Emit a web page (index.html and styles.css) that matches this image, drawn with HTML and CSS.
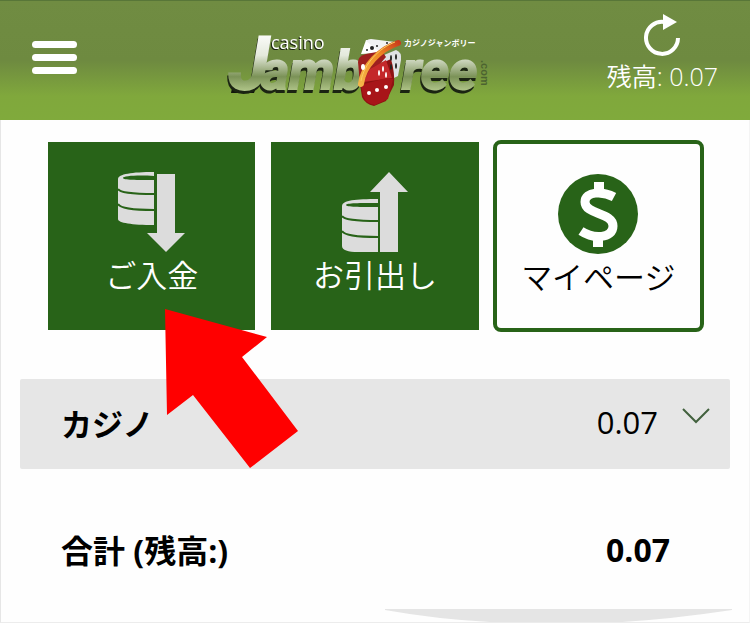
FILE: index.html
```html
<!DOCTYPE html>
<html lang="ja">
<head>
    <meta charset="UTF-8">
    <meta name="viewport" content="width=device-width, initial-scale=1.0">
    <title>カジノジャンボリー</title>
    <link rel="stylesheet" href="styles.css">
</head>
<body>
    <header class="header">
        <button class="menu" type="button" aria-label="メニュー">
            <span class="bar"></span>
            <span class="bar"></span>
            <span class="bar"></span>
        </button>
        <a class="logo" href="#" aria-label="casino Jamboree">
            <svg width="286" height="80" viewBox="232 28 286 80">
                <defs>
                    <linearGradient id="metal" gradientUnits="userSpaceOnUse" x1="0" y1="31" x2="0" y2="92">
                        <stop offset="0" stop-color="#ffffff"/>
                        <stop offset="0.4" stop-color="#e4e9dc"/>
                        <stop offset="0.6" stop-color="#a9b890"/>
                        <stop offset="0.75" stop-color="#7b9257"/>
                        <stop offset="1" stop-color="#b4c98c"/>
                    </linearGradient>
                    <linearGradient id="ring" gradientUnits="userSpaceOnUse" x1="360" y1="85" x2="400" y2="42">
                        <stop offset="0" stop-color="#f5b64a"/>
                        <stop offset="0.6" stop-color="#f08a24"/>
                        <stop offset="1" stop-color="#c8391a"/>
                    </linearGradient>
                </defs>
                <path class="logo-shadow" d="M232 88h24l-2 5h-23z"/>
                <g class="logo-name">
                    <text class="logo-big" x="229" y="89">J</text>
                    <text x="261" y="89">amb</text>
                    <text x="402" y="89">ree</text>
                </g>
                <text class="logo-casino" x="271" y="49">casino</text>
                <text class="logo-kana" x="404" y="46">カジノジャンボリー</text>
                <text class="logo-com" transform="translate(481 60) rotate(90)">.com</text>
                <!-- white dice -->
                <path d="M361 54l5-14 19 3-5 10z" fill="#fff"/>
                <path d="M366 41q2-2 5-2l24 3-14 11z" fill="#f1f2f3"/>
                <path d="M384 55l12-5q6 2 5 10l-3 16-12 6-6-14z" fill="#dfe1e4"/>
                <!-- red dice -->
                <path d="M358 62q0-6 8-8l16-3 4 6-14 16-12 12z" fill="#9e1f1f"/>
                <path d="M360 84l13-17 18-8q4 14 3 26l-8 16-12 5q-9-2-12-9z" fill="#8d1212"/>
                <path d="M363 82l7-13 16-9 6 18z" fill="#c4282a"/>
                <path d="M361 85l25-7 7 1-5 20-13 6q-9-1-12-9z" fill="#a81519"/>
                <path d="M361 84C363 66 380 49 398 43" fill="none" stroke="url(#ring)" stroke-width="6" stroke-linecap="round"/>
                <path d="M361 81C364 64 379 48 395 42" fill="none" stroke="#f9cf62" stroke-width="1"/>
                <g fill="#fff">
                    <ellipse cx="369" cy="93" rx="2" ry="2"/>
                    <ellipse cx="377" cy="90" rx="2" ry="2"/>
                    <ellipse cx="386" cy="87" rx="2" ry="2"/>
                    <ellipse cx="379" cy="73" rx="1" ry="3"/>
                    <ellipse cx="383" cy="69" rx="1" ry="3"/>
                    <ellipse cx="386" cy="75" rx="1" ry="3"/>
                    <ellipse cx="363" cy="67" rx="2" ry="3"/>
                </g>
                <g fill="#222">
                    <circle cx="367" cy="50" r="1"/>
                    <circle cx="372" cy="48" r="2"/>
                    <circle cx="377" cy="46" r="1"/>
                    <circle cx="387" cy="43" r="1"/>
                    <ellipse cx="391" cy="58" rx="1" ry="3"/>
                    <ellipse cx="396" cy="57" rx="1" ry="3"/>
                    <ellipse cx="391" cy="67" rx="1" ry="3"/>
                    <ellipse cx="396" cy="66" rx="1" ry="3"/>
                </g>
            </svg>
        </a>
        <div class="balance">
            <button class="reload" type="button" aria-label="更新">
                <svg width="38" height="43" viewBox="0 0 38 43">
                    <path d="M35 25A16 16 0 1 1 21 9" fill="none" stroke="#fff" stroke-width="4"/>
                    <path d="M20 1l14 8-14 8z" fill="#fff"/>
                </svg>
            </button>
            <span class="balance-text">残高: 0.07</span>
        </div>
    </header>

    <main class="main">
        <div class="tiles">
            <button class="tile" type="button">
                <svg class="tile-icon" width="80" height="80" viewBox="0 0 80 80">
                    <path d="M42 0C20 0 6 2 6 7v40c0 4 14 6 36 6z" fill="#dcdcdc"/>
                    <path d="M42 4v4c-17 0-31 0-31-2s14-3 31-2z" fill="#286318"/>
                    <path d="M6 17c2 4 16 5 36 5M6 32c2 4 16 6 36 6" fill="none" stroke="#286318" stroke-width="2"/>
                    <path d="M45 2h18v59h10L54 80 35 61h10z" fill="#dcdcdc"/>
                </svg>
                <span>ご入金</span>
                <svg class="pointer" width="134" height="160" viewBox="0 0 134 160">
                    <path d="M0 0l102 28-25 20 56 74-48 37-57-73-26 20z" fill="#f00"/>
                </svg>
            </button>
            <button class="tile" type="button">
                <svg class="tile-icon" width="80" height="80" viewBox="0 0 80 80">
                    <path d="M43 27C21 27 7 28 7 34v40c0 4 6 6 16 6h20z" fill="#dcdcdc"/>
                    <path d="M43 31v4c-18 0-32 0-32-2s14-2 32-2z" fill="#286318"/>
                    <path d="M7 44c2 4 16 5 36 5M7 59c2 4 16 6 36 6" fill="none" stroke="#286318" stroke-width="2"/>
                    <path d="M45 80V20H35L54 0l19 20H63v60z" fill="#dcdcdc"/>
                </svg>
                <span>お引出し</span>
            </button>
            <button class="tile tile-light" type="button">
                <svg class="tile-icon" width="80" height="80" viewBox="0 0 80 80">
                    <circle cx="40" cy="40" r="40" fill="#286318"/>
                    <path d="M56 23c-11-6-29-6-29 5 0 13 28 10 28 24 0 13-20 13-32 5" fill="none" stroke="#fff" stroke-width="9"/>
                    <path d="M36 8h10v12H36zM35 60h10v13H35z" fill="#fff"/>
                </svg>
                <span>マイページ</span>
            </button>
        </div>

        <button class="row casino" type="button" aria-expanded="false">
            <span class="row-label">カジノ</span>
            <span>0.07</span>
            <svg class="chevron" width="28" height="16" viewBox="0 0 28 16">
                <path d="M1 1l13 13L27 1" fill="none" stroke="#42613e" stroke-width="2"/>
            </svg>
        </button>
        <div class="row total">
            <span class="row-label">合計 (残高:)</span>
            <span>0.07</span>
        </div>
        <svg class="curve" width="347" height="13" viewBox="0 0 347 13">
            <path d="M0 0h347v1q-60 9-110 12H105Q50 10 0 1z" fill="#e5e5e5"/>
        </svg>
    </main>
</body>
</html>
```

FILE: styles.css
```css
:root {
    --green: #286318;
    --font: "Open Sans", "Noto Sans CJK JP", sans-serif;
}
* {
    box-sizing: border-box;
}
body {
    margin: 0;
    background: #fefefe;
    color: #000;
    font-family: var(--font);
}
button {
    border: none;
    padding: 0;
    background: none;
    color: inherit;
    font-family: inherit;
    cursor: pointer;
}
svg {
    display: block;
}

/* header */
.header {
    display: grid;
    grid-template-columns: 1fr auto 1fr;
    align-items: start;
    height: 120px;
    padding: 0 32px;
    border-top: 1px solid #587638;
    background: linear-gradient(#708c42 0%, #6e8a40 50%, #80a83c 80%, #80aa3c 100%);
}
.menu {
    display: flex;
    flex-direction: column;
    gap: 6px;
    width: 45px;
    margin-top: 40px;
}
.bar {
    width: 100%;
    height: 7px;
    border-radius: 4px;
    background: #fff;
}
.logo {
    margin-top: 27px;
}
.logo svg {
    overflow: visible;
}
.logo-name {
    font-family: Roboto, sans-serif;
    font-size: 54px;
    font-weight: bold;
    font-style: italic;
    fill: url(#metal);
    stroke: url(#metal);
    stroke-width: 2px;
    filter: drop-shadow(-1px 3px 0 #1b2412);
}
.logo-big {
    font-size: 74px;
}
.logo-shadow {
    fill: #10160b;
}
.logo-casino {
    font-family: "Open Sans", sans-serif;
    font-size: 18px;
    fill: #fff;
    filter: drop-shadow(-1px 1px 0 #1b2412);
}
.logo-kana {
    font-family: "Noto Sans CJK JP", sans-serif;
    font-size: 8px;
    font-weight: bold;
    fill: #fff;
}
.logo-com {
    font-family: "Liberation Sans", sans-serif;
    font-size: 11px;
    font-weight: bold;
    fill: #4c6330;
}
.balance {
    display: flex;
    flex-direction: column;
    align-items: center;
    justify-self: end;
    margin-top: 12px;
    color: #fff;
}
.balance-text {
    font-size: 25px;
    font-weight: 350;
    line-height: 40px;
    white-space: nowrap;
}

/* tiles */
.main {
    border-left: 1px solid #e6e6e6;
    border-right: 1px solid #f4f4f4;
    border-bottom: 1px solid #ececec;
}
.tiles {
    display: grid;
    grid-template-columns: repeat(3, 1fr);
    gap: 16px;
    padding: 22px 47px 49px;
}
.tile {
    position: relative;
    display: flex;
    flex-direction: column;
    align-items: center;
    height: 188px;
    padding-top: 30px;
    background: var(--green);
    color: #fff;
    font-size: 31px;
    font-weight: 350;
    line-height: 46px;
}
.tile-light {
    height: 192px;
    margin: -2px;
    border: 4px solid var(--green);
    border-radius: 8px;
    background: #fefefe;
    color: #000;
}
.pointer {
    position: absolute;
    z-index: 1;
    top: 167px;
    left: 117px;
}

/* balance rows */
.row {
    display: flex;
    align-items: center;
    margin: 0 19px;
    padding: 0 41px;
    font-size: 31px;
}
.row-label {
    flex: 1;
    text-align: left;
    font-weight: 700;
}
.casino {
    width: calc(100% - 38px);
    height: 90px;
    padding-right: 20px;
    padding-bottom: 4px;
    border-radius: 2px;
    background: #e6e6e6;
}
.chevron {
    margin: 0 0 12px 24px;
}
.total {
    height: 140px;
    padding: 20px 60px 0 41px;
    font-size: 32px;
    font-weight: 700;
}
.curve {
    margin-left: auto;
    margin-right: 17px;
}
```
